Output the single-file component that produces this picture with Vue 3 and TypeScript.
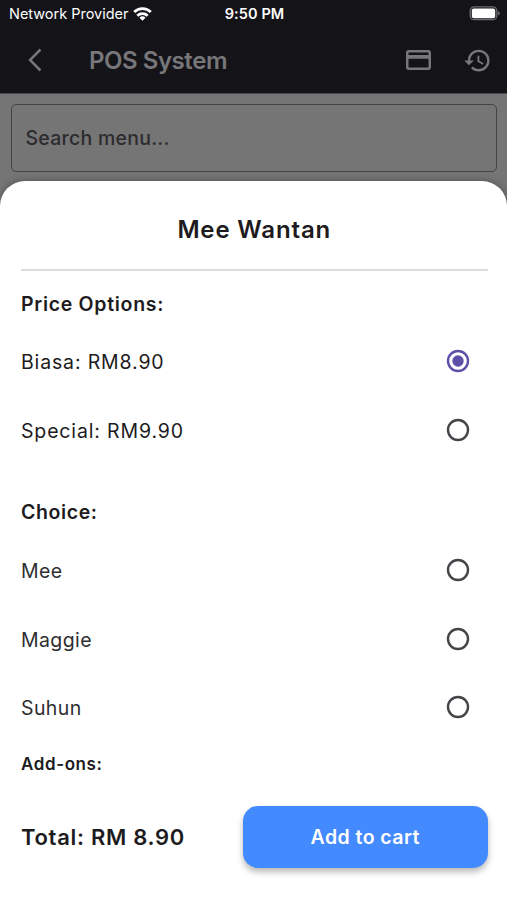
<script setup lang="ts">
import { ref, computed } from 'vue'

interface PriceOption {
  name: string
  price: number
}

const prices: PriceOption[] = [
  { name: 'Biasa', price: 8.9 },
  { name: 'Special', price: 9.9 },
]
const choices: string[] = ['Mee', 'Maggie', 'Suhun']

const selectedPrice = ref<number>(0)
const selectedChoice = ref<string | null>(null)
const total = computed<string>(() => prices[selectedPrice.value].price.toFixed(2))
</script>

<template>
  <div class="screen">
    <div class="status">
      <div class="carrier">
        <span class="carrier-name">Network Provider</span>
        <svg class="wifi" viewBox="0 0 19 14" width="19" height="14">
          <g fill="none" stroke="#fff" stroke-width="2.8">
            <path d="M1.200 5a11.800 11.800 0 0 1 16.600 0" />
            <path d="M4.300 8.700a7.500 7.500 0 0 1 10.400 0" />
          </g>
          <path d="M9.500 13.800l-3-3.100a4.300 4.300 0 0 1 6 0z" fill="#fff" />
        </svg>
      </div>
      <span class="time">9:50 PM</span>
      <svg class="battery" viewBox="0 0 31 15" width="31" height="15">
        <rect x="1.200" y="0.900" width="26.600" height="12.800" rx="4" fill="none" stroke="#6b6b6e" stroke-width="1.300" />
        <rect x="2.800" y="2.400" width="23.400" height="9.800" rx="2" fill="#fff" />
        <path d="M28.800 5q2 .8 2 2.300t-2 2.300z" fill="#6b6b6e" />
      </svg>
    </div>

    <header class="appbar">
      <svg class="back" viewBox="0 0 16 26" width="16" height="26">
        <path d="M13.500 2.500L3 13l10.500 10.500" fill="none" stroke="#77777a" stroke-width="2.500" />
      </svg>
      <h1 class="title">POS System</h1>
      <svg class="card-icon" viewBox="2 4 20 16" width="25" height="20">
        <path fill="#77777a" d="M20 4H4c-1.110 0-1.990.890-1.990 2L2 18c0 1.110.890 2 2 2h16c1.110 0 2-.890 2-2V6c0-1.110-.890-2-2-2zm0 14H4v-7h16v7zm0-10H4V6h16v2z" />
      </svg>
      <svg class="history" viewBox="0 0 24 24" width="29" height="29">
        <path fill="#77777a" d="M13 3a9 9 0 0 0-9 9H1l3.890 3.890.070.140L9 12H6c0-3.870 3.130-7 7-7s7 3.130 7 7-3.130 7-7 7c-1.930 0-3.680-.790-4.940-2.060l-1.420 1.420A8.954 8.954 0 0 0 13 21a9 9 0 0 0 0-18zm-1 5v5l4.280 2.540.720-1.210-3.500-2.080V8H12z" />
      </svg>
    </header>

    <main class="body">
      <div class="search">Search menu...</div>
    </main>

    <section class="sheet">
      <h2 class="item-name">Mee Wantan</h2>
      <h3 class="group-title">Price Options:</h3>
      <div v-for="(p, i) in prices" :key="p.name" class="option price" @click="selectedPrice = i">
        <span class="label">{{ p.name }}: RM{{ p.price.toFixed(2) }}</span>
        <svg class="radio" :class="{ on: selectedPrice === i }" viewBox="0 0 24 24" width="24" height="24">
          <circle class="ring" cx="12" cy="12" r="10" />
          <circle v-if="selectedPrice === i" class="dot" cx="12" cy="12" r="5.700" />
        </svg>
      </div>
      <h3 class="group-title choice-title">Choice:</h3>
      <div v-for="c in choices" :key="c" class="option" @click="selectedChoice = c">
        <span class="label">{{ c }}</span>
        <svg class="radio" :class="{ on: selectedChoice === c }" viewBox="0 0 24 24" width="24" height="24">
          <circle class="ring" cx="12" cy="12" r="10" />
          <circle v-if="selectedChoice === c" class="dot" cx="12" cy="12" r="5.700" />
        </svg>
      </div>
      <h3 class="addons">Add-ons:</h3>
      <footer class="footer">
        <span class="total">Total: RM {{ total }}</span>
        <button class="add">Add to cart</button>
      </footer>
    </section>
  </div>
</template>

<style>
body {
  background: #757575;
}
</style>

<style scoped>
.screen {
  position: relative;
  height: 900px;
  overflow: hidden;
  background: #757575;
  font-family: Inter, sans-serif;
  color: #1d1b20;
}
.status {
  display: grid;
  grid-template-columns: 1fr auto 1fr;
  align-items: center;
  height: 27px;
  padding: 0 7px 0 9px;
  background: #141318;
  color: #fff;
}
.carrier {
  display: flex;
  align-items: center;
  gap: 5px;
  font-size: 14.500px;
  white-space: nowrap;
}
.carrier-name {
  letter-spacing: -0.020px;
}
.time {
  font-size: 14.500px;
  font-weight: 600;
  letter-spacing: 0.100px;
}
.battery {
  justify-self: end;
}
.appbar {
  display: flex;
  align-items: center;
  box-sizing: border-box;
  height: 67px;
  padding: 0 15px 0 27px;
  border-bottom: 1px solid #49484b;
  background: #141318;
}
.title {
  margin: 2px auto 0 46px;
  font-size: 24px;
  font-weight: 600;
  line-height: 30px;
  letter-spacing: -0.450px;
  color: #77777a;
}
.card-icon {
  margin-right: 32px;
}
.body {
  padding: 10px 10px 0 11px;
}
.search {
  box-sizing: border-box;
  height: 68px;
  padding-left: 13.500px;
  border: 1.500px solid #444;
  border-radius: 5px;
  font-size: 19.500px;
  font-weight: 500;
  line-height: 67px;
  letter-spacing: 0.250px;
  color: #2c2b2e;
}
.sheet {
  position: absolute;
  inset: 180.500px 0 0;
  display: flex;
  flex-direction: column;
  box-sizing: border-box;
  padding: 0 19.500px 0 21px;
  border-radius: 25px 25px 0 0;
  background: #fff;
  box-shadow: 0 0 7px rgba(0, 0, 0, 0.350);
}
.item-name {
  height: 88.500px;
  margin: 0;
  border-bottom: 2px solid #dcdcdc;
  font-size: 24px;
  font-weight: 600;
  line-height: 98px;
  letter-spacing: 0.850px;
  text-align: center;
}
.group-title {
  height: 56px;
  margin: 0;
  font-size: 19.500px;
  font-weight: 600;
  line-height: 66px;
  letter-spacing: 0.700px;
}
.choice-title {
  height: 60px;
  margin-top: 12px;
  line-height: 73px;
  letter-spacing: 0.600px;
}
.option {
  display: flex;
  align-items: center;
  justify-content: space-between;
  height: 68.500px;
  padding-right: 17.500px;
  font-size: 19.500px;
  letter-spacing: 0.400px;
  color: #2f2e31;
}
.label {
  padding-top: 2px;
}
.price {
  letter-spacing: 0.850px;
  color: #1d1b20;
}
.radio {
  flex: none;
}
.ring {
  fill: none;
  stroke: #454448;
  stroke-width: 2.400;
}
.on .ring {
  stroke: #5f4fa8;
}
.dot {
  fill: #5f4fa8;
}
.addons {
  margin: 0;
  font-size: 17px;
  font-weight: 600;
  line-height: 44px;
  letter-spacing: 0.600px;
}
.footer {
  display: flex;
  align-items: center;
  justify-content: space-between;
  margin-top: 20px;
}
.total {
  font-size: 22px;
  font-weight: 600;
  letter-spacing: 0.700px;
}
.add {
  width: 244.500px;
  height: 62px;
  padding: 0;
  border: 0;
  border-radius: 15px;
  background: #448aff;
  box-shadow: 0 4px 6px rgba(0, 0, 0, 0.280);
  font: 600 19.500px Inter, sans-serif;
  letter-spacing: 0.450px;
  color: #fff;
}
</style>
